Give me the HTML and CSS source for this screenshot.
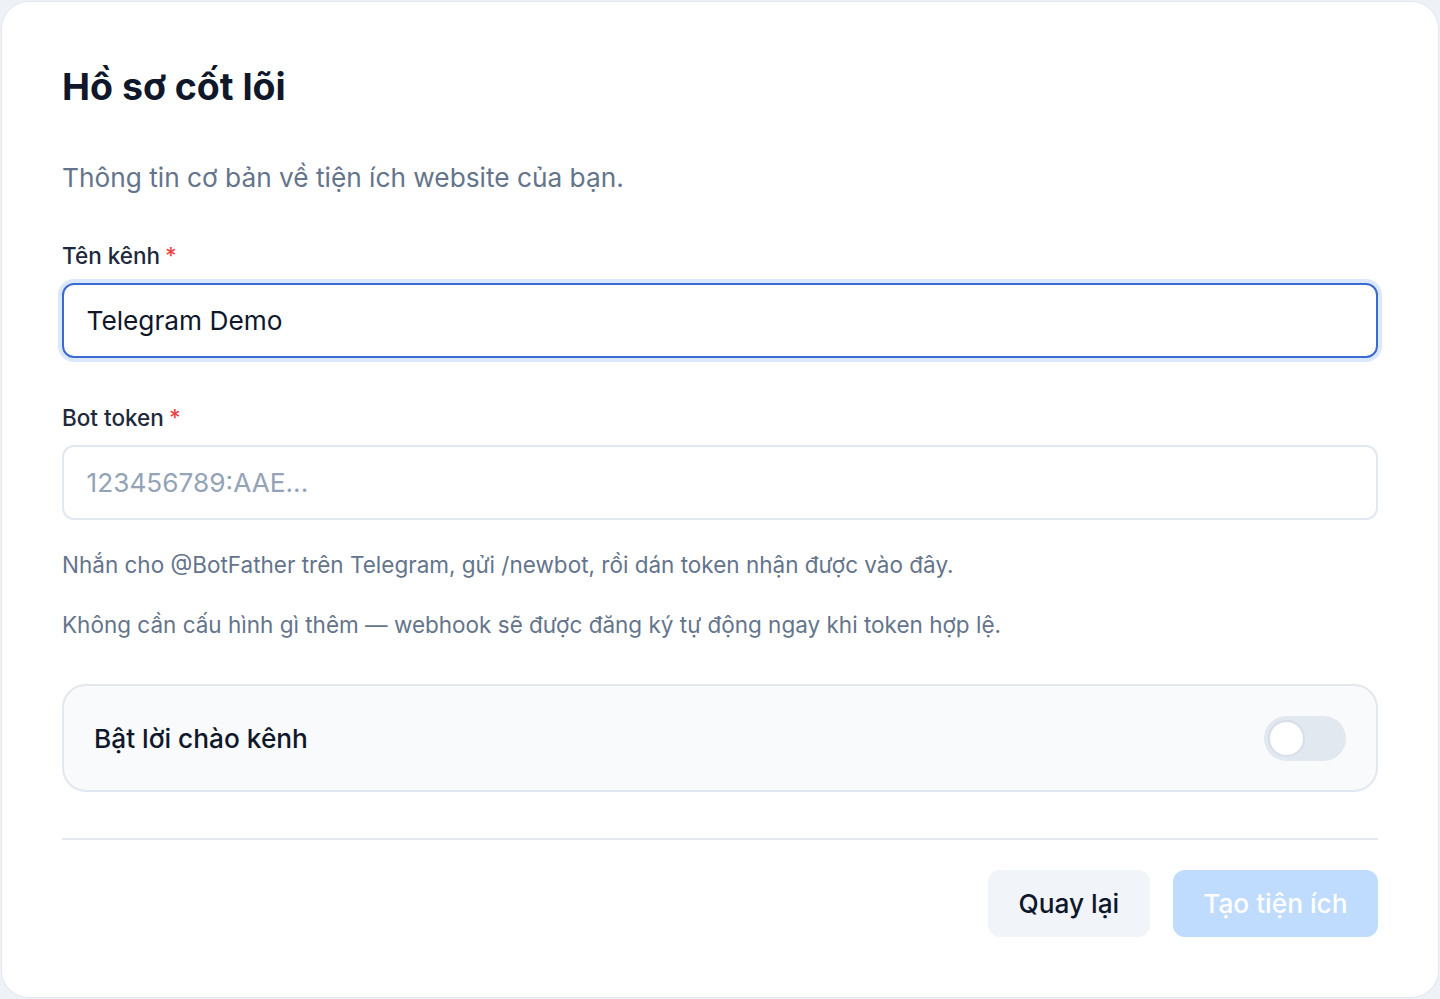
FILE: index.html
```
<!DOCTYPE html>
<html lang="vi">
<head>
    <meta charset="UTF-8">
    <meta name="viewport" content="width=device-width, initial-scale=1.0">
    <title>Hồ sơ cốt lõi</title>
    <link rel="stylesheet" href="styles.css">
</head>
<body>
    <div class="card">
        <h1>Hồ sơ cốt lõi</h1>
        <p class="subtitle">Thông tin cơ bản về tiện ích website của bạn.</p>

        <div class="field">
            <label for="channelName">Tên kênh<span class="req">*</span></label>
            <input type="text" id="channelName" class="input focused" value="Telegram Demo">
        </div>

        <div class="field">
            <label for="botToken">Bot token<span class="req">*</span></label>
            <input type="text" id="botToken" class="input" placeholder="123456789:AAE...">
        </div>

        <p class="hint">Nhắn cho @BotFather trên Telegram, gửi /newbot, rồi dán token nhận được vào đây.</p>
        <p class="hint">Không cần cấu hình gì thêm — webhook sẽ được đăng ký tự động ngay khi token hợp lệ.</p>

        <div class="toggle-row">
            <span class="toggle-label">Bật lời chào kênh</span>
            <button type="button" class="switch" aria-pressed="false"><span class="knob"></span></button>
        </div>

        <div class="actions">
            <button type="button" class="btn btn-back">Quay lại</button>
            <button type="button" class="btn btn-primary" disabled>Tạo tiện ích</button>
        </div>
    </div>
</body>
</html>
```

FILE: styles.css
```
* {
    box-sizing: border-box;
}
body {
    font-family: Inter, 'Noto Sans', sans-serif;
    background-color: #eef2f6;
    margin: 0;
    padding: 1px;
    min-height: 100vh;
}
.card {
    background: #fff;
    border: 1px solid #e2e8f0;
    border-radius: 28px;
    padding: 62px 60px 60px;
    min-height: 997px;
}
h1 {
    color: #0f172a;
    font-size: 37.5px;
    font-weight: 700;
    line-height: 46px;
    margin: 0;
}
.subtitle {
    color: #64748b;
    font-size: 26.25px;
    line-height: 42px;
    margin: 47px 0 0;
}
.field {
    display: flex;
    flex-direction: column;
    gap: 9px;
    margin-top: 39px;
}
.field + .field {
    margin-top: 42px;
}
label {
    color: #1e293b;
    font-size: 22.5px;
    font-weight: 500;
    line-height: 36px;
}
.req {
    color: #ef4444;
    margin-left: 5px;
}
.input {
    font-family: inherit;
    font-size: 26.25px;
    color: #0f172a;
    height: 75px;
    padding: 0 22.5px;
    border: 2px solid #e2e8f0;
    border-radius: 12px;
    background: #fff;
    outline: none;
}
.input::placeholder {
    color: #94a3b8;
}
.input.focused {
    border-color: #3b6bd1;
    box-shadow: 0 0 0 4px #dbe7fb;
}
.hint {
    color: #64748b;
    font-size: 22.5px;
    line-height: 36px;
    margin: 27px 0 0;
}
.hint + .hint {
    margin-top: 24px;
}
.toggle-row {
    display: flex;
    align-items: center;
    justify-content: space-between;
    margin-top: 41px;
    height: 108px;
    padding: 0 30px;
    background: #f8fafc;
    border: 2px solid #e2e8f0;
    border-radius: 24px;
}
.toggle-label {
    color: #0f172a;
    font-size: 26.25px;
    font-weight: 500;
}
.switch {
    width: 82px;
    height: 45px;
    border: none;
    border-radius: 23px;
    background: #e2e8f0;
    padding: 0 4px;
    display: flex;
    align-items: center;
    cursor: pointer;
}
.knob {
    width: 37px;
    height: 37px;
    border-radius: 50%;
    background: #fff;
    border: 2px solid #d8dee8;
}
.actions {
    display: flex;
    justify-content: flex-end;
    gap: 23px;
    margin-top: 46px;
    padding-top: 30px;
    border-top: 2px solid #e5e9ef;
}
.btn {
    font-family: inherit;
    font-size: 26.25px;
    font-weight: 500;
    height: 67px;
    padding: 0 30.5px;
    border: none;
    border-radius: 12px;
    cursor: pointer;
}
.btn-back {
    background: #f1f5f9;
    color: #0f172a;
}
.btn-primary {
    background: #bfdbfe;
    color: #fff;
}
.btn-primary:disabled {
    cursor: not-allowed;
}
```
